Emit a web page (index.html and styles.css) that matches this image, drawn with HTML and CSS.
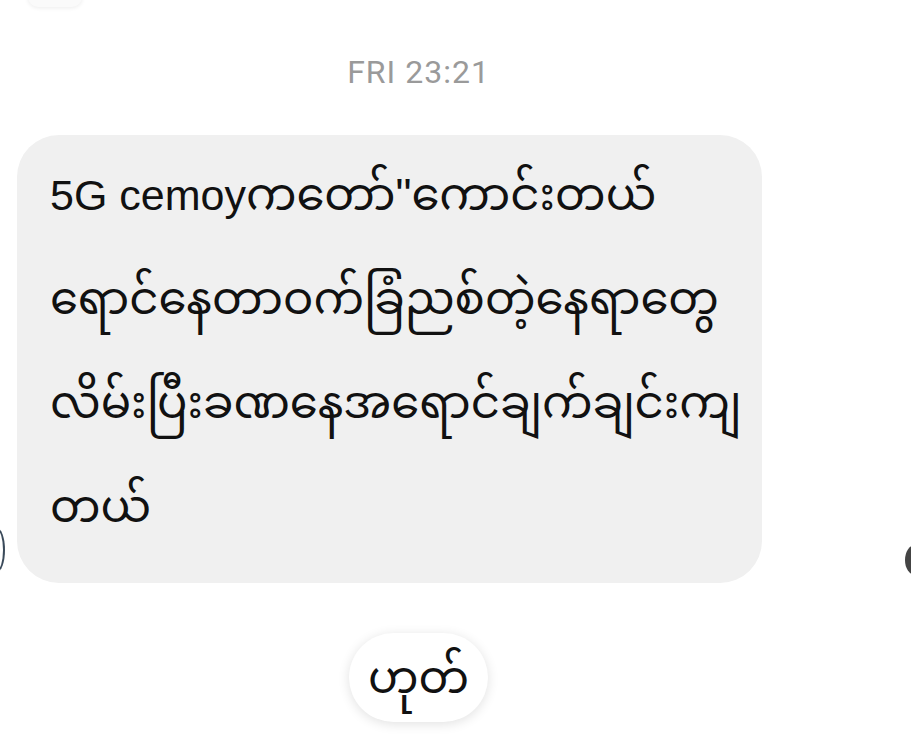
FILE: index.html
```html
<!DOCTYPE html>
<html lang="my">

<head>
    <meta charset="UTF-8">
    <meta name="viewport" content="width=device-width, initial-scale=1.0">
    <title>Chat</title>
    <link rel="stylesheet" href="styles.css">
</head>

<body>
    <div class="screen">
        <div class="prev"></div>
        <div class="edge left"></div>
        <div class="edge right"></div>

        <div class="thread">
            <p class="stamp">FRI 23:21</p>

            <div class="bubble">
                <p class="msg"><span class="latin">5G cemoy</span>ကတော်"ကောင်းတယ်<br>ရောင်နေတာဝက်ခြံညစ်တဲ့နေရာတွေ<br>လိမ်းပြီးခဏနေအရောင်ချက်ချင်းကျ<br>တယ်</p>
            </div>

            <div class="reply">
                <span class="pill">ဟုတ်</span>
            </div>
        </div>
    </div>
</body>

</html>
```

FILE: styles.css
```css
body {
    margin: 0;
    background: #fff;
    font-family: Roboto, "Noto Sans Myanmar", "Noto Sans", sans-serif;
    color: #111;
}

.screen {
    position: relative;
    width: 911px;
    height: 745px;
    overflow: hidden;
}

.thread {
    padding: 53px 74px 0 0;
}

p {
    margin: 0;
}

.stamp {
    font-size: 32px;
    line-height: 38px;
    letter-spacing: 1px;
    color: #9a9a9a;
    text-align: center;
}

.bubble {
    margin: 44px 0 0 17px;
    width: 745px;
    height: 448px;
    box-sizing: border-box;
    padding: 8px 30px 0 33px;
    background: #f0f0f0;
    border-radius: 42px;
}

.msg {
    font-family: "Liberation Sans", "Noto Sans Myanmar", sans-serif;
    font-size: 45px;
    line-height: 104px;
    white-space: nowrap;
}

.latin {
    font-size: 43px;
}

.reply {
    margin-top: 50px;
    text-align: center;
}

.pill {
    display: inline-block;
    width: 139px;
    height: 89px;
    line-height: 89px;
    font-size: 45px;
    border-radius: 45px;
    background: #fff;
    box-shadow: 0 2px 12px rgba(0, 0, 0, 0.12);
}

/* cropped bits of neighbouring ui at the photo edges */
.prev {
    position: absolute;
    left: 28px;
    top: -30px;
    width: 54px;
    height: 37px;
    border-radius: 0 0 10px 10px;
    background: #fafafa;
    box-shadow: 0 1px 4px rgba(0, 0, 0, 0.08);
}

.edge {
    position: absolute;
    width: 14px;
    height: 40px;
    border-radius: 50%;
}

.edge.left {
    left: -11px;
    top: 528px;
    border: 2px solid #3a4a5a;
    border-left: 0;
}

.edge.right {
    left: 905px;
    top: 545px;
    width: 20px;
    height: 30px;
    background: #444;
}
```
